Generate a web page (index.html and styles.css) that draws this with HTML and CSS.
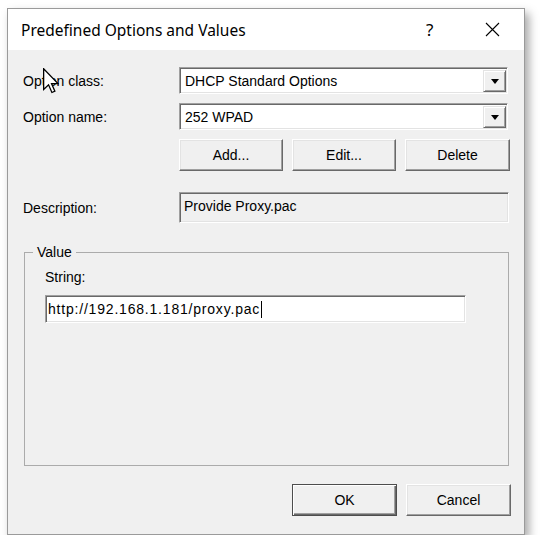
FILE: index.html
```html
<!DOCTYPE html>
<html>
<head>
<meta charset="utf-8">
<link rel="stylesheet" href="styles.css">
</head>
<body>
<div class="window">
  <div class="titlebar">
    <span class="title">Predefined Options and Values</span>
    <span class="help">?</span>
    <span class="close"><svg width="15" height="15" viewBox="0 0 15 15"><path d="M1 1L14 14M14 1L1 14" stroke="#000" stroke-width="1.1" fill="none"/></svg></span>
  </div>
  <div class="content">
    <div class="row">
      <div class="lbl">Option class:</div>
      <div class="combo"><span class="val">DHCP Standard Options</span><span class="drop"><i class="tri"></i></span></div>
    </div>
    <div class="row row2">
      <div class="lbl">Option name:</div>
      <div class="combo"><span class="val">252 WPAD</span><span class="drop"><i class="tri"></i></span></div>
    </div>
    <div class="btnrow">
      <div class="btn w104">Add...</div>
      <div class="btn w104">Edit...</div>
      <div class="btn w105">Delete</div>
    </div>
    <div class="row descrow">
      <div class="lbl">Description:</div>
      <div class="descfield">Provide Proxy.pac</div>
    </div>
    <fieldset class="group">
      <legend class="legend">Value</legend>
      <div class="strlbl">String:</div>
      <div class="textbox"><span class="url">http://192.168.1.181/proxy.pac</span><span class="caret"></span></div>
    </fieldset>
    <div class="footer">
      <div class="btn w105 default">OK</div>
      <div class="btn w105">Cancel</div>
    </div>
  </div>
  <svg class="cursor" width="16" height="26" viewBox="0 0 12.4 20">
    <path d="M0.5 0.5 L0.5 16.5 L4.3 12.9 L6.9 18.9 L9.2 17.9 L6.6 12 L11.6 12 Z" fill="#fff" stroke="#000" stroke-width="1" stroke-linejoin="miter"/>
  </svg>
</div>
</body>
</html>
```
FILE: styles.css
```css
html, body {
  margin: 0;
  padding: 0;
  background: #ffffff;
}
body {
  font-family: "Liberation Sans", Arial, sans-serif;
  font-size: 14px;
  color: #000;
}
.window {
  position: relative;
  box-sizing: border-box;
  margin: 8px 0 0 7px;
  width: 518px;
  height: 527px;
  border: 1px solid #9a9a9a;
  background: #f0f0f0;
  box-shadow: 4px 5px 9px rgba(0,0,0,0.35);
  display: flex;
  flex-direction: column;
}
.titlebar {
  height: 41px;
  background: #ffffff;
  display: flex;
  align-items: center;
  padding-left: 13px;
}
.title {
  font-family: "Noto Sans", "Open Sans", sans-serif;
  font-size: 15.5px;
  flex: 1;
  padding-top: 1px;
}
.help {
  font-family: "Noto Sans", sans-serif;
  font-size: 17px;
  width: 14px;
  margin-right: 45px;
}
.close {
  width: 15px;
  height: 15px;
  margin-right: 24px;
  display: flex;
}
.content {
  flex: 1;
  padding: 17px 13px 0 15px;
}
.row {
  display: flex;
  align-items: center;
  height: 27px;
}
.row2 { margin-top: 9px; }
.lbl {
  width: 156px;
  flex: none;
}
.combo {
  box-sizing: border-box;
  width: 329px;
  height: 27px;
  background: #fff;
  border-top: 1px solid #a0a0a0;
  border-left: 1px solid #a0a0a0;
  border-bottom: 1px solid #fff;
  border-right: 1px solid #fff;
  box-shadow: inset 1px 1px 0 #696969, inset -1px -1px 0 #e3e3e3;
  display: flex;
  align-items: center;
  padding: 2px 1px 2px 5px;
}
.val { flex: 1; }
.drop {
  box-sizing: border-box;
  width: 23px;
  height: 22px;
  background: #f0f0f0;
  border-top: 1px solid #e3e3e3;
  border-left: 1px solid #e3e3e3;
  border-bottom: 1px solid #696969;
  border-right: 1px solid #696969;
  box-shadow: inset 1px 1px 0 #fff, inset -1px -1px 0 #a0a0a0;
  display: flex;
  align-items: center;
  justify-content: center;
}
.tri {
  width: 0;
  height: 0;
  border-left: 4px solid transparent;
  border-right: 4px solid transparent;
  border-top: 5px solid #000;
  margin-top: 1px;
}
.btnrow {
  display: flex;
  gap: 9px;
  margin-top: 9px;
  padding-left: 156px;
}
.btn {
  box-sizing: border-box;
  height: 32px;
  background: #f0f0f0;
  border-top: 1px solid #fff;
  border-left: 1px solid #fff;
  border-bottom: 1px solid #696969;
  border-right: 1px solid #696969;
  box-shadow: inset -1px -1px 0 #a0a0a0, inset 1px 1px 0 #e3e3e3;
  display: flex;
  align-items: center;
  justify-content: center;
  padding-bottom: 1px;
}
.w104 { width: 104px; }
.w105 { width: 105px; }
.btn.default {
  border: 1px solid #4d4d4d;
  box-shadow: inset 1px 1px 0 #fff, inset -1px -1px 0 #696969, inset -2px -2px 0 #a0a0a0;
}
.descrow {
  margin-top: 21px;
  height: 31px;
}
.descfield {
  box-sizing: border-box;
  width: 330px;
  height: 31px;
  background: #f0f0f0;
  border-top: 1px solid #a0a0a0;
  border-left: 1px solid #a0a0a0;
  border-bottom: 1px solid #fff;
  border-right: 1px solid #fff;
  box-shadow: inset 1px 1px 0 #696969, inset -1px -1px 0 #e3e3e3;
  padding: 0 0 3px 4px;
  display: flex;
  align-items: center;
}
.group {
  box-sizing: border-box;
  margin: 21px 0 0 1px;
  width: 485px;
  height: 222px;
  border: 1px solid #ababab;
  padding: 10px 0 0 20px;
}
.legend {
  margin-left: -12px;
  padding: 0 4px;
  line-height: 16px;
}
.strlbl {
  line-height: 16px;
  margin-top: -1px;
}
.textbox {
  box-sizing: border-box;
  margin-top: 10px;
  width: 421px;
  height: 28px;
  background: #fff;
  border-top: 1px solid #a0a0a0;
  border-left: 1px solid #a0a0a0;
  border-bottom: 1px solid #fff;
  border-right: 1px solid #fff;
  box-shadow: inset 1px 1px 0 #696969, inset -1px -1px 0 #e3e3e3;
  display: flex;
  align-items: center;
  padding-left: 2px;
}
.url { letter-spacing: 0.8px; }
.caret {
  width: 1px;
  height: 17px;
  background: #000;
  margin-left: 1px;
}
.footer {
  display: flex;
  justify-content: flex-end;
  gap: 9px;
  margin-top: 18px;
}
.cursor {
  position: absolute;
  left: 35px;
  top: 59px;
}
```
